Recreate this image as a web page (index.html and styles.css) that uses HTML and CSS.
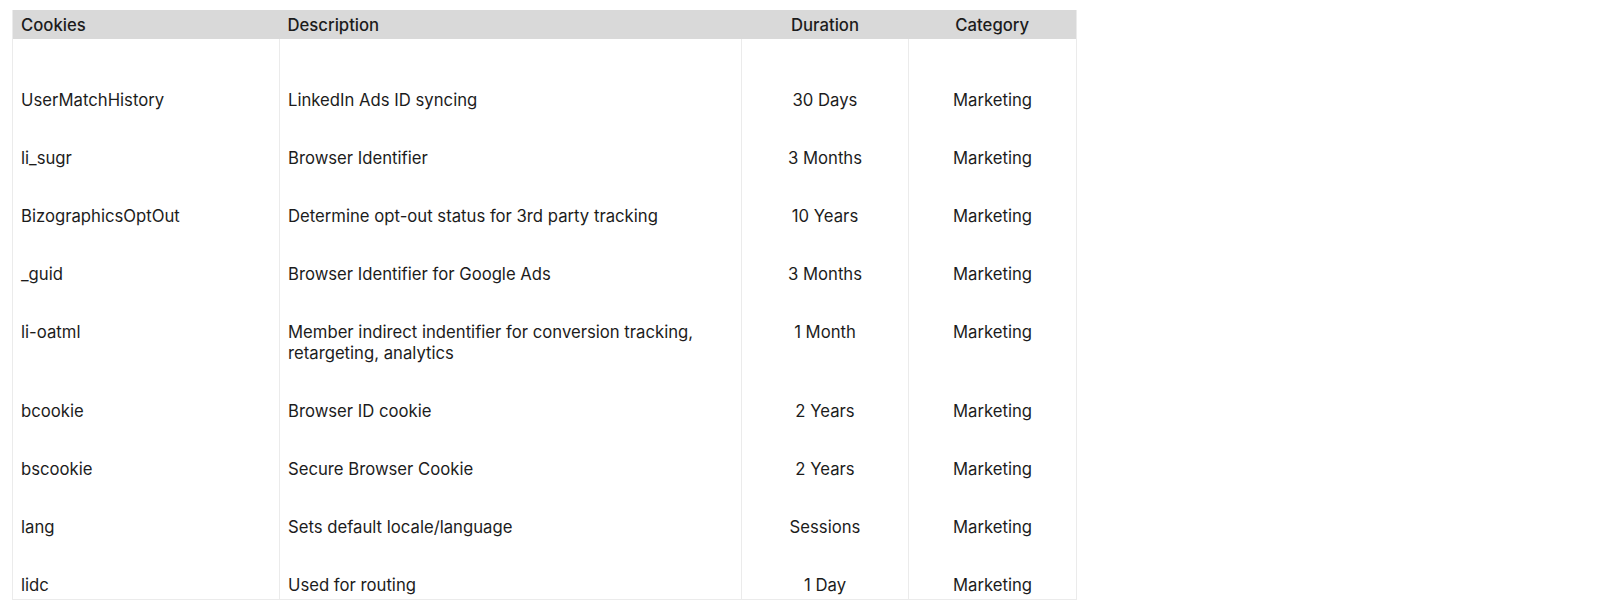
FILE: index.html
```html
<!DOCTYPE html>
<html lang="en">
<head>
<meta charset="utf-8">
<title>Cookies</title>
<link rel="stylesheet" href="styles.css">
</head>
<body>
<div class="page">
  <table class="cookie-table">
    <colgroup>
      <col class="col-name">
      <col class="col-desc">
      <col class="col-dur">
      <col class="col-cat">
    </colgroup>
    <thead>
      <tr>
        <th class="left">Cookies</th>
        <th class="left">Description</th>
        <th class="center">Duration</th>
        <th class="center">Category</th>
      </tr>
    </thead>
    <tbody>
      <tr><td>UserMatchHistory</td><td>LinkedIn Ads ID syncing</td><td class="center">30 Days</td><td class="center">Marketing</td></tr>
      <tr><td>li_sugr</td><td>Browser Identifier</td><td class="center">3 Months</td><td class="center">Marketing</td></tr>
      <tr><td>BizographicsOptOut</td><td>Determine opt-out status for 3rd party tracking</td><td class="center">10 Years</td><td class="center">Marketing</td></tr>
      <tr><td>_guid</td><td>Browser Identifier for Google Ads</td><td class="center">3 Months</td><td class="center">Marketing</td></tr>
      <tr><td>li-oatml</td><td>Member indirect indentifier for conversion tracking,<br>retargeting, analytics</td><td class="center">1 Month</td><td class="center">Marketing</td></tr>
      <tr><td>bcookie</td><td>Browser ID cookie</td><td class="center">2 Years</td><td class="center">Marketing</td></tr>
      <tr><td>bscookie</td><td>Secure Browser Cookie</td><td class="center">2 Years</td><td class="center">Marketing</td></tr>
      <tr><td>lang</td><td>Sets default locale/language</td><td class="center">Sessions</td><td class="center">Marketing</td></tr>
      <tr><td>lidc</td><td>Used for routing</td><td class="center">1 Day</td><td class="center">Marketing</td></tr>
    </tbody>
  </table>
</div>
</body>
</html>
```

FILE: styles.css
```css
html, body {
  margin: 0;
  padding: 0;
  background: #ffffff;
}

body {
  font-family: Inter, "Liberation Sans", Arial, sans-serif;
  font-size: 16.7px;
  color: #1c1c1c;
}

.page {
  padding: 10px 0 0 12px;
}

.cookie-table {
  border-collapse: collapse;
  table-layout: fixed;
  width: 1064px;
  border: 1px solid #ebebeb;
  border-top: none;
}

.col-name { width: 267px; }
.col-desc { width: 462px; }
.col-dur { width: 167px; }
.col-cat { width: 168px; }

.cookie-table th {
  background: #d9d9d9;
  font-weight: 500;
  line-height: 21.5px;
  padding: 5px 8px 2.5px;
  border: none;
}

.cookie-table td {
  line-height: 21.5px;
  padding: 34.5px 8px 2px;
  vertical-align: top;
  border-left: 1px solid #ebebeb;
  border-right: 1px solid #ebebeb;
}

.cookie-table tbody tr:first-child td {
  padding-top: 50.5px;
}

.left { text-align: left; }
.center { text-align: center; }
```
